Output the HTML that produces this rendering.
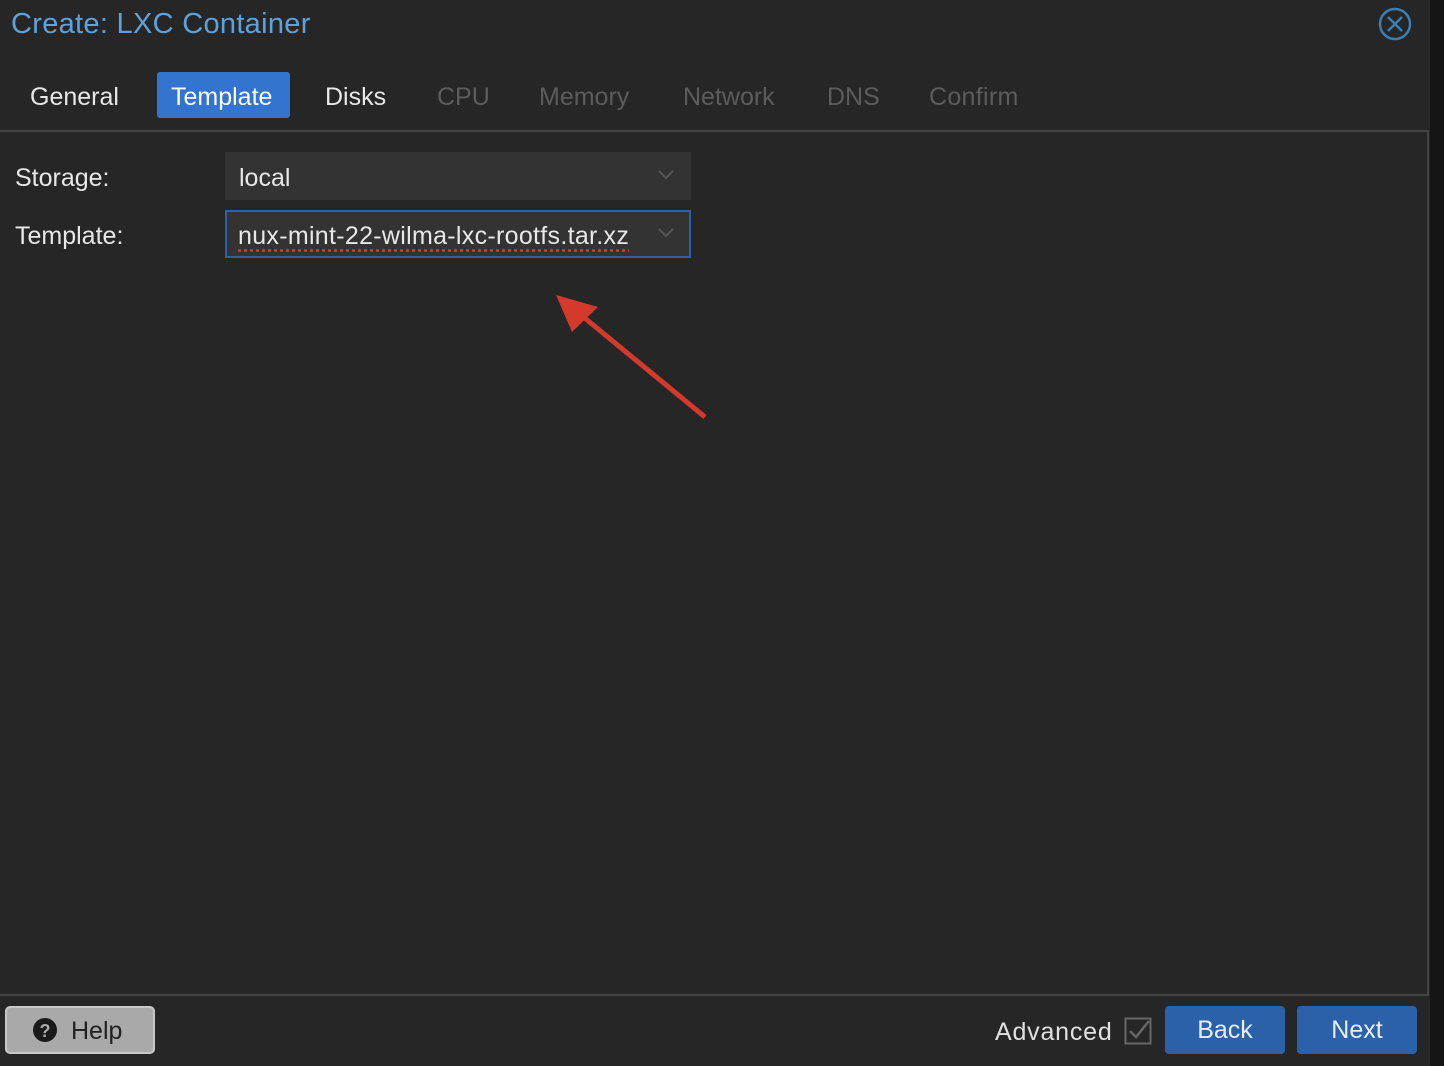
<!DOCTYPE html>
<html><head><style>
body{margin:0;width:1444px;height:1066px;background:#151515;position:relative;overflow:hidden;font-family:"Liberation Sans",sans-serif;}
.win{position:absolute;left:0;top:0;width:1430px;height:1066px;background:#262626;}
.t{position:absolute;white-space:nowrap;}
.panel{position:absolute;left:0;top:130px;width:1427px;height:862px;border-top:2px solid #444;border-right:2px solid #444;border-bottom:2px solid #444;}
.combo{position:absolute;left:225px;width:466px;height:48px;background:#333;box-sizing:border-box;}
.btn{position:absolute;top:1006px;height:48px;border-radius:4px;background:#2a61a8;color:#e8eef8;font-size:25px;text-align:center;line-height:48px;}
</style></head><body>
<div class="win">
<div class="t" style="left:11px;top:8px;font-size:29px;color:#5ea2dc;letter-spacing:0.3px;">Create: LXC Container</div>
<svg style="position:absolute;left:1378px;top:7px" width="34" height="34"><circle cx="17" cy="17" r="15" fill="none" stroke="#3c7fb6" stroke-width="2.5"/><path d="M10 10L24 24M24 10L10 24" stroke="#3c7fb6" stroke-width="2.5"/></svg>
<div class="t" style="left:30px;top:83px;font-size:25px;color:#e8e8e8;">General</div>
<div style="position:absolute;left:157px;top:72px;width:133px;height:46px;background:#3274cf;border-radius:3px;"></div>
<div class="t" style="left:171px;top:83px;font-size:25px;color:#fff;">Template</div>
<div class="t" style="left:325px;top:83px;font-size:25px;color:#e8e8e8;">Disks</div>
<div class="t" style="left:437px;top:83px;font-size:25px;color:#5c5c5c;">CPU</div>
<div class="t" style="left:539px;top:83px;font-size:25px;color:#5c5c5c;">Memory</div>
<div class="t" style="left:683px;top:83px;font-size:25px;color:#5c5c5c;">Network</div>
<div class="t" style="left:827px;top:83px;font-size:25px;color:#5c5c5c;">DNS</div>
<div class="t" style="left:929px;top:83px;font-size:25px;color:#5c5c5c;letter-spacing:0.3px;">Confirm</div>
<div class="panel"></div>
<div class="t" style="left:15px;top:164px;font-size:25px;color:#e8e8e8;">Storage:</div>
<div class="t" style="left:15px;top:222px;font-size:25px;color:#e8e8e8;">Template:</div>
<div class="combo" style="top:152px;"></div>
<div class="t" style="left:239px;top:164px;font-size:25px;color:#e8e8e8;">local</div>
<div class="combo" style="top:210px;border:2px solid #2a62a8;"></div>
<div class="t" style="left:238px;top:222px;font-size:25px;color:#e8e8e8;letter-spacing:0.3px;text-decoration:underline dotted #d04030;text-underline-offset:5px;">nux-mint-22-wilma-lxc-rootfs.tar.xz</div>
<svg style="position:absolute;left:655px;top:166px" width="24" height="80"><path d="M4 5L11 12L18 5" fill="none" stroke="#555" stroke-width="2"/><path d="M4 63L11 70L18 63" fill="none" stroke="#555" stroke-width="2"/></svg>
<svg style="position:absolute;left:550px;top:290px" width="165" height="135"><path d="M155 127L25 20" stroke="#d33a2c" stroke-width="5"/><polygon points="6,5 48,17 22,42" fill="#d33a2c"/></svg>
<div style="position:absolute;left:5px;top:1006px;width:150px;height:48px;box-sizing:border-box;border:2px solid #c8c8c8;border-radius:5px;background:#a9a9a9;"></div>
<svg style="position:absolute;left:33px;top:1018px" width="24" height="24"><circle cx="12" cy="12" r="12" fill="#1a1a1a"/><text x="12" y="19" text-anchor="middle" font-family="Liberation Sans" font-weight="bold" font-size="18" fill="#a9a9a9">?</text></svg>
<div class="t" style="left:71px;top:1017px;font-size:25px;color:#222;">Help</div>
<div class="t" style="left:995px;top:1018px;font-size:25px;color:#e0e0e0;letter-spacing:0.8px;">Advanced</div>
<svg style="position:absolute;left:1124px;top:1017px" width="28" height="28"><rect x="1.5" y="1.5" width="25" height="25" fill="none" stroke="#666" stroke-width="2"/><path d="M6 14L12 20L25 4" fill="none" stroke="#666" stroke-width="2.5"/></svg>
<div class="btn" style="left:1165px;width:120px;">Back</div>
<div class="btn" style="left:1297px;width:120px;">Next</div>
</div>
</body></html>
